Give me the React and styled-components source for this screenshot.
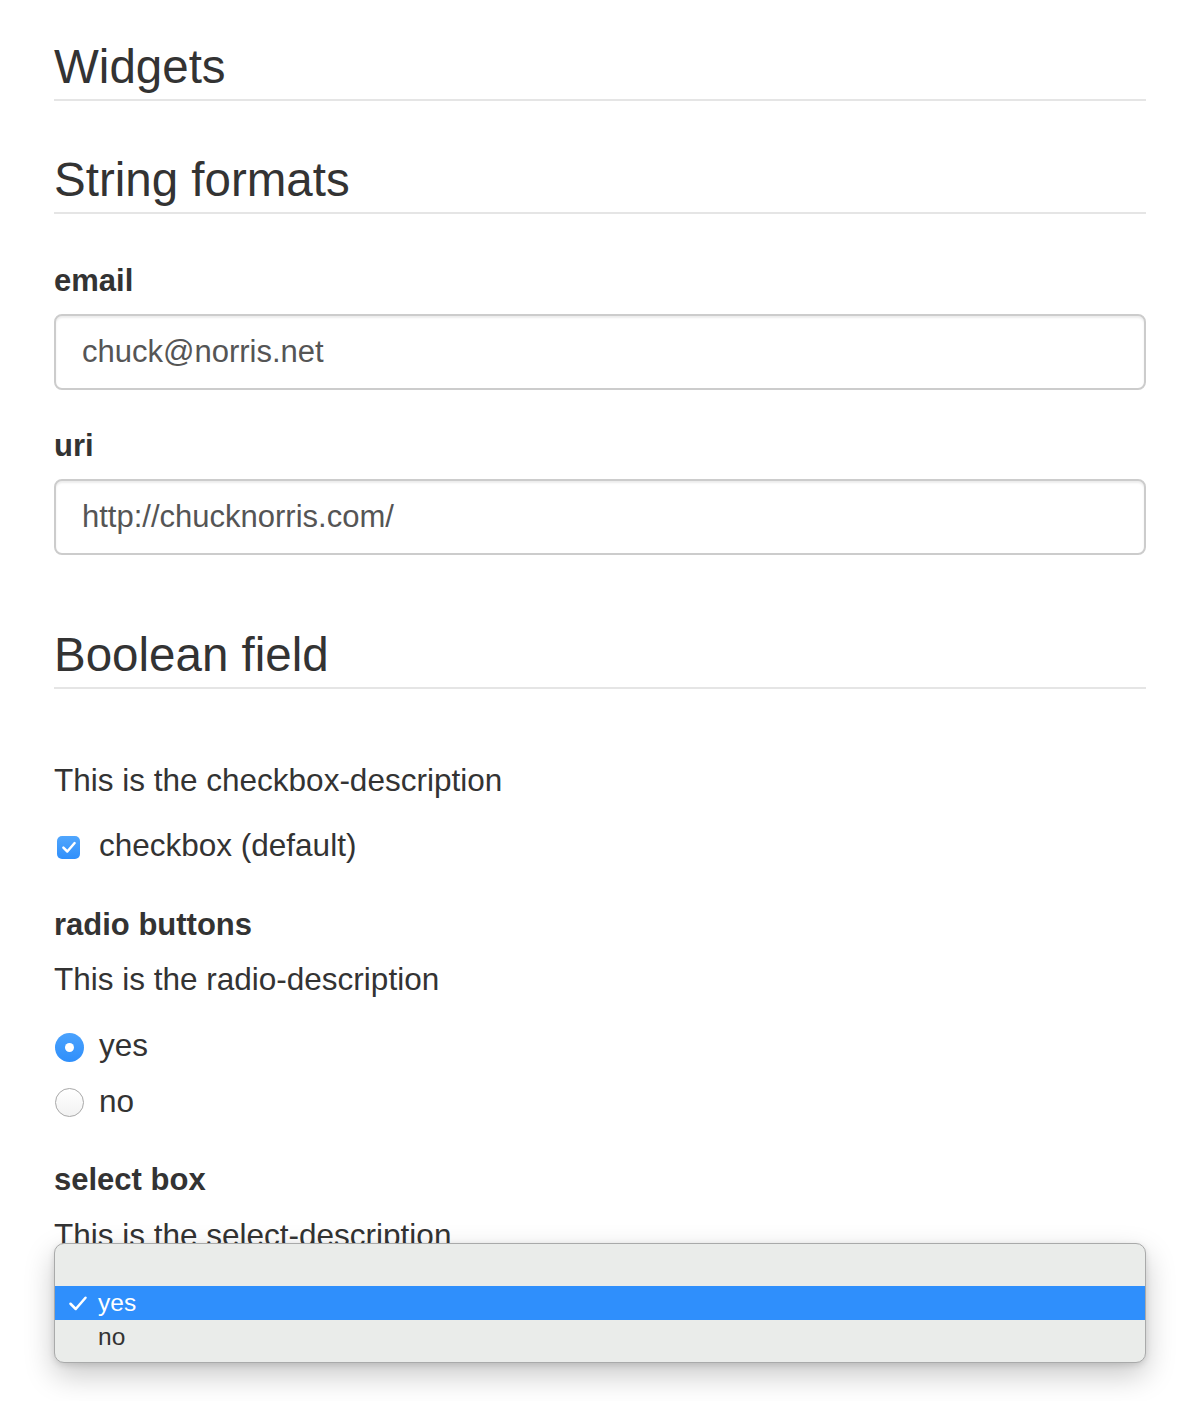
import React from "react";
import styled, { createGlobalStyle } from "styled-components";

const GlobalStyle = createGlobalStyle`
  body {
    margin: 0;
    background: #fff;
    font-family: "Liberation Sans", Arial, sans-serif;
    font-size: 31.5px;
    line-height: 40px;
    color: #333;
  }
  * { box-sizing: border-box; }
`;

const Page = styled.div`
  padding: 35px 32px 60px 54px;
`;

const Legend = styled.div`
  font-size: 47.5px;
  line-height: 64px;
  color: #333;
  border-bottom: 2px solid #e5e5e5;
  margin-top: ${(p) => p.top || 0}px;
  margin-bottom: ${(p) => p.gap || 47}px;
`;

const FormGroup = styled.div`
  margin-bottom: ${(p) => (p.gap == null ? 36 : p.gap)}px;
`;

const Label = styled.div`
  font-weight: bold;
  font-size: 31px;
  margin-bottom: ${(p) => (p.gap == null ? 13 : p.gap)}px;
`;

const TextInput = styled.input`
  display: block;
  width: 100%;
  height: 76px;
  padding: 0 26px;
  border: 2px solid #ccc;
  border-radius: 8px;
  font-family: "Liberation Sans", Arial, sans-serif;
  font-size: 31px;
  color: #555;
  background: #fff;
  box-shadow: inset 0 2px 2px rgba(0, 0, 0, 0.075);
  outline: none;
`;

const Description = styled.p`
  margin: 0 0 ${(p) => p.gap || 0}px;
`;

const OptionRow = styled.label`
  display: flex;
  align-items: center;
  height: 40px;
  margin-bottom: ${(p) => p.gap || 0}px;
`;

const Mark = styled.span`
  width: 45px;
  display: flex;
  align-items: center;
  flex: none;
`;

const CheckBox = styled.span`
  width: 23px;
  height: 23px;
  margin-left: 3px;
  margin-top: 4px;
  border-radius: 5px;
  background: linear-gradient(#50a6fd, #2f8ffb);
  display: flex;
  align-items: center;
  justify-content: center;
`;

const Radio = styled.span`
  width: 29px;
  height: 29px;
  margin-left: 1px;
  margin-top: ${(p) => (p.checked ? 4 : 2)}px;
  border-radius: 50%;
  display: flex;
  align-items: center;
  justify-content: center;
  background: ${(p) =>
    p.checked ? "linear-gradient(#4aa2fd, #2f8ffb)" : "linear-gradient(#fff, #f2f2f2)"};
  border: ${(p) => (p.checked ? "none" : "1.5px solid #a8a8a8")};
  &::after {
    content: "";
    display: ${(p) => (p.checked ? "block" : "none")};
    width: 9px;
    height: 9px;
    border-radius: 50%;
    background: #fff;
  }
`;

const SelectWrap = styled.div`
  position: relative;
  margin-top: 10px;
`;

const SelectBox = styled.div`
  height: 76px;
  border: 2px solid #66afe9;
  border-radius: 8px;
  background: #fff;
`;

const Popup = styled.div`
  position: absolute;
  top: -22px;
  left: 0;
  right: 0;
  padding: 8px 0;
  background: #eaecea;
  border: 1px solid #a9aaaa;
  border-radius: 10px;
  box-shadow: 0 12px 30px rgba(0, 0, 0, 0.22), 0 2px 6px rgba(0, 0, 0, 0.12);
  font-size: 24.5px;
`;

const PopupItem = styled.div`
  height: 34px;
  display: flex;
  align-items: center;
  padding-left: 11px;
  background: ${(p) => (p.active ? "#2f8ffc" : "transparent")};
  color: ${(p) => (p.active ? "#fff" : "#333")};
`;

const Tick = styled.span`
  width: 32px;
  display: flex;
  align-items: center;
`;

const Check = ({ size, width }) => (
  <svg width={size} height={size} viewBox="0 0 16 16">
    <path
      d="M3 8.5 L6.5 12 L13 4.5"
      fill="none"
      stroke="#fff"
      strokeWidth={width}
      strokeLinecap="round"
      strokeLinejoin="round"
    />
  </svg>
);

export default function App() {
  return (
    <Page>
      <GlobalStyle />
      <Legend>Widgets</Legend>
      <Legend>String formats</Legend>
      <FormGroup>
        <Label>email</Label>
        <TextInput type="text" defaultValue="chuck@norris.net" />
      </FormGroup>
      <FormGroup gap={0}>
        <Label>uri</Label>
        <TextInput type="text" defaultValue="http://chucknorris.com/" />
      </FormGroup>

      <Legend top={68} gap={71}>Boolean field</Legend>
      <Description gap={25}>This is the checkbox-description</Description>
      <OptionRow gap={40}>
        <Mark>
          <CheckBox>
            <Check size={18} width={2.2} />
          </CheckBox>
        </Mark>
        checkbox (default)
      </OptionRow>

      <Label gap={14}>radio buttons</Label>
      <Description gap={26}>This is the radio-description</Description>
      <OptionRow gap={16}>
        <Mark>
          <Radio checked />
        </Mark>
        yes
      </OptionRow>
      <OptionRow gap={39}>
        <Mark>
          <Radio />
        </Mark>
        no
      </OptionRow>

      <Label gap={15}>select box</Label>
      <Description>This is the select-description</Description>
      <SelectWrap>
        <SelectBox />
        <Popup>
          <PopupItem />
          <PopupItem active>
            <Tick>
              <Check size={24} width={1.7} />
            </Tick>
            yes
          </PopupItem>
          <PopupItem>
            <Tick />
            no
          </PopupItem>
        </Popup>
      </SelectWrap>
    </Page>
  );
}
